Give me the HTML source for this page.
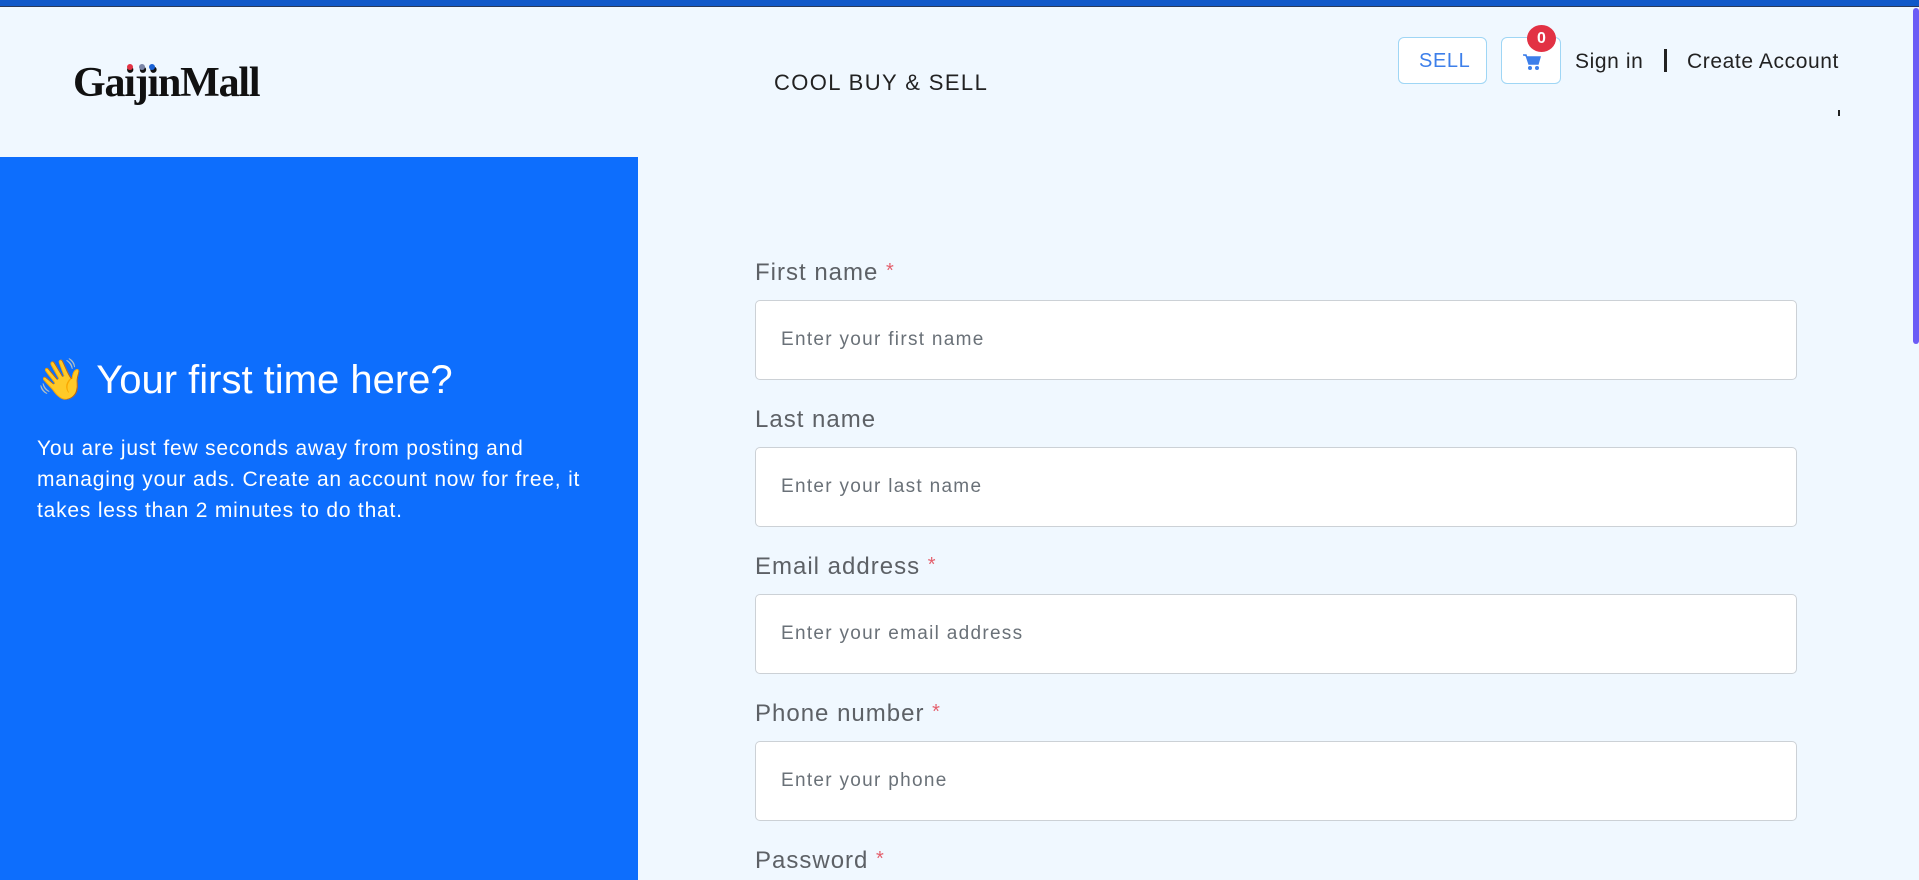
<!DOCTYPE html>
<html><head><meta charset="utf-8"><style>
*{margin:0;padding:0;box-sizing:border-box}
html,body{width:1919px;height:880px;overflow:hidden;background:#f0f8ff;font-family:"Liberation Sans",sans-serif}
.topbar{position:absolute;left:0;top:0;width:1919px;height:7px;background:#1159c9;border-bottom:1px solid #2a3a5a}
.abs{position:absolute;white-space:nowrap}
.logo{left:73px;top:62px;font-family:"Liberation Serif",serif;font-weight:bold;font-size:42px;letter-spacing:-1.2px;color:#111;line-height:1}
.dot{position:absolute;width:6px;height:6px;border-radius:50%}
.btn{position:absolute;border:1px solid #9fd6f5;border-radius:6px;background:#fff}
.left{position:absolute;left:0;top:157px;width:638px;height:723px;background:#0d6efd}
.lbl{position:absolute;left:755px;font-size:24px;letter-spacing:1px;color:#5d6166;line-height:1}
.lbl span{color:#e4606d;font-size:20px;vertical-align:top}
.inp{position:absolute;left:755px;width:1042px;height:80px;background:#fff;border:1px solid #ccd1d6;border-radius:5px;font-size:19px;letter-spacing:1.3px;color:#6a7178;padding-left:25px;line-height:78px}
</style></head><body>
<div class="topbar"></div>
<div class="abs logo">GaijinMall</div>
<div class="dot" style="left:127px;top:64px;background:#e23244"></div>
<div class="dot" style="left:139px;top:64px;background:#7b86a8"></div>
<div class="dot" style="left:149px;top:64px;background:#1a62d6"></div>
<div class="abs" style="left:774px;top:70px;font-size:22px;color:#222;letter-spacing:1.4px">COOL BUY &amp; SELL</div>
<div class="btn" style="left:1398px;top:37px;width:89px;height:47px"></div>
<div class="abs" style="left:1419px;top:50px;font-size:20px;letter-spacing:0.6px;color:#3d7fea">SELL</div>
<div class="btn" style="left:1501px;top:37px;width:60px;height:47px"></div>
<svg class="abs" style="left:1522px;top:53px" width="20" height="18" viewBox="0 0 20 18"><path d="M1 2h3l3 9h9l2-7H5" fill="#3d7fea" stroke="#3d7fea" stroke-width="1.5"/><circle cx="8" cy="15" r="2" fill="#3d7fea"/><circle cx="15" cy="15" r="2" fill="#3d7fea"/></svg>
<div class="abs" style="left:1527px;top:25px;width:29px;height:27px;border-radius:50%;background:#e23244;color:#fff;font-weight:bold;font-size:16px;text-align:center;line-height:27px">0</div>
<div class="abs" style="left:1575px;top:50px;font-size:21px;letter-spacing:0.6px;color:#222">Sign in</div>
<div class="abs" style="left:1664px;top:49px;width:3px;height:23px;background:#222"></div>
<div class="abs" style="left:1687px;top:50px;font-size:21px;letter-spacing:0.6px;color:#222">Create Account</div>
<div class="abs" style="left:1838px;top:110px;width:2px;height:6px;background:#222"></div>
<div class="abs" style="left:1913px;top:8px;width:6px;height:336px;background:#6b5cf6;border-radius:3px"></div>
<div class="left">
<div class="abs" style="left:36px;top:200px;font-size:40px;line-height:46px;color:#fff">👋 Your first time here?</div>
<div class="abs" style="left:37px;top:276px;font-size:21px;letter-spacing:0.8px;line-height:31px;color:#fff;white-space:normal;width:580px">You are just few seconds away from posting and managing your ads. Create an account now for free, it takes less than 2 minutes to do that.</div>
</div>
<div class="lbl" style="top:261px">First name <span>*</span></div>
<div class="inp" style="top:300px">Enter your first name</div>
<div class="lbl" style="top:408px">Last name</div>
<div class="inp" style="top:447px">Enter your last name</div>
<div class="lbl" style="top:555px">Email address <span>*</span></div>
<div class="inp" style="top:594px">Enter your email address</div>
<div class="lbl" style="top:702px">Phone number <span>*</span></div>
<div class="inp" style="top:741px">Enter your phone</div>
<div class="lbl" style="top:849px">Password <span>*</span></div>
</body></html>
